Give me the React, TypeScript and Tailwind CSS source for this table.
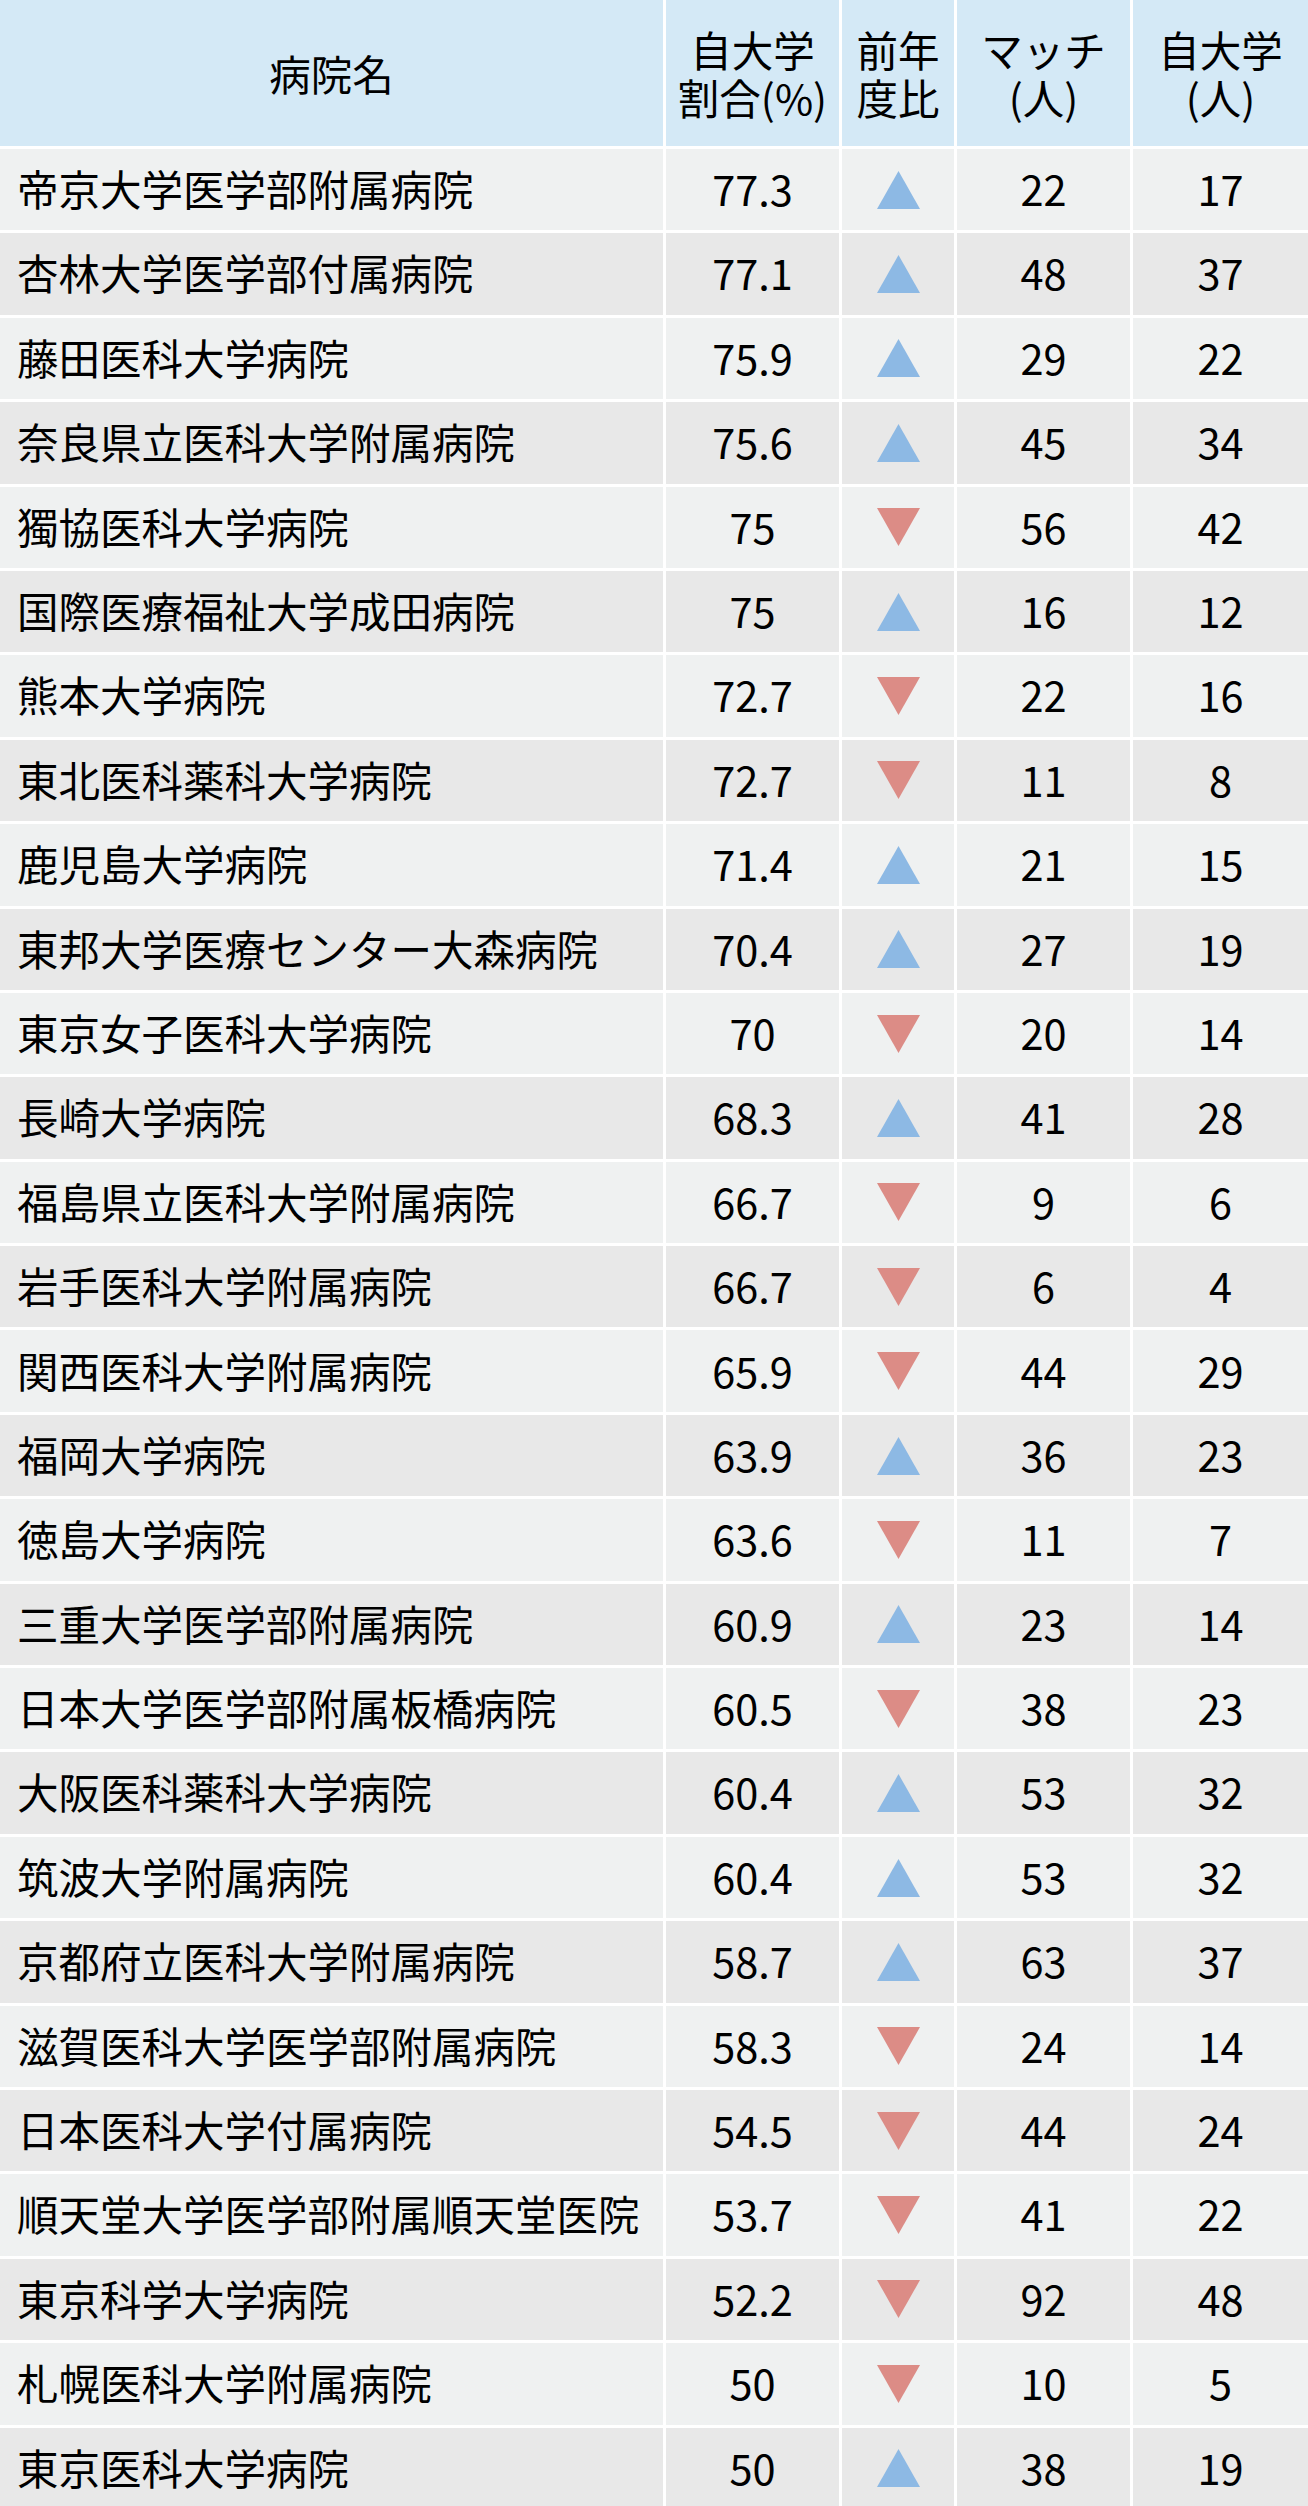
const rows: [string, string, "up" | "down", number, number][] = [
  ["帝京大学医学部附属病院", "77.3", "up", 22, 17],
  ["杏林大学医学部付属病院", "77.1", "up", 48, 37],
  ["藤田医科大学病院", "75.9", "up", 29, 22],
  ["奈良県立医科大学附属病院", "75.6", "up", 45, 34],
  ["獨協医科大学病院", "75", "down", 56, 42],
  ["国際医療福祉大学成田病院", "75", "up", 16, 12],
  ["熊本大学病院", "72.7", "down", 22, 16],
  ["東北医科薬科大学病院", "72.7", "down", 11, 8],
  ["鹿児島大学病院", "71.4", "up", 21, 15],
  ["東邦大学医療センター大森病院", "70.4", "up", 27, 19],
  ["東京女子医科大学病院", "70", "down", 20, 14],
  ["長崎大学病院", "68.3", "up", 41, 28],
  ["福島県立医科大学附属病院", "66.7", "down", 9, 6],
  ["岩手医科大学附属病院", "66.7", "down", 6, 4],
  ["関西医科大学附属病院", "65.9", "down", 44, 29],
  ["福岡大学病院", "63.9", "up", 36, 23],
  ["徳島大学病院", "63.6", "down", 11, 7],
  ["三重大学医学部附属病院", "60.9", "up", 23, 14],
  ["日本大学医学部附属板橋病院", "60.5", "down", 38, 23],
  ["大阪医科薬科大学病院", "60.4", "up", 53, 32],
  ["筑波大学附属病院", "60.4", "up", 53, 32],
  ["京都府立医科大学附属病院", "58.7", "up", 63, 37],
  ["滋賀医科大学医学部附属病院", "58.3", "down", 24, 14],
  ["日本医科大学付属病院", "54.5", "down", 44, 24],
  ["順天堂大学医学部附属順天堂医院", "53.7", "down", 41, 22],
  ["東京科学大学病院", "52.2", "down", 92, 48],
  ["札幌医科大学附属病院", "50", "down", 10, 5],
  ["東京医科大学病院", "50", "up", 38, 19],
];

function Arrow({ dir }: { dir: "up" | "down" }) {
  return dir === "up" ? (
    <svg width="43" height="38" viewBox="0 0 43 38">
      <polygon points="21.5,0 43,38 0,38" fill="#8db9e4" />
    </svg>
  ) : (
    <svg width="43" height="38" viewBox="0 0 43 38">
      <polygon points="0,0 43,0 21.5,38" fill="#dc8c86" />
    </svg>
  );
}

export default function App() {
  const head = "bg-[#d4e9f6] flex flex-col items-center justify-center text-center";
  return (
    <div
      className="w-[1308px] bg-white text-black text-[41.5px]"
      style={{ fontFamily: '"Noto Sans CJK JP", "Noto Sans", sans-serif' }}
    >
      <div className="grid grid-cols-[663px_173px_112px_173px_175px] gap-[3px] auto-rows-[81.4px] grid-rows-[146px]">
        <div className={head}>病院名</div>
        <div className={head}>
          <span className="leading-[48px]">自大学</span>
          <span className="leading-[48px]">割合(%)</span>
        </div>
        <div className={head}>
          <span className="leading-[48px]">前年</span>
          <span className="leading-[48px]">度比</span>
        </div>
        <div className={head}>
          <span className="leading-[48px]">マッチ</span>
          <span className="leading-[48px]">(人)</span>
        </div>
        <div className={head}>
          <span className="leading-[48px]">自大学</span>
          <span className="leading-[48px]">(人)</span>
        </div>

        {rows.map(([name, pct, dir, match, own], i) => {
          const bg = i % 2 === 0 ? "bg-[#eff1f1]" : "bg-[#e8e8e8]";
          return [
            <div key={`n${i}`} className={`${bg} flex items-center pl-[17px] pb-[3px] whitespace-nowrap`}>
              {name}
            </div>,
            <div key={`p${i}`} className={`${bg} flex items-center justify-center pb-[3px]`}>
              {pct}
            </div>,
            <div key={`d${i}`} className={`${bg} flex items-center justify-center`}>
              <Arrow dir={dir} />
            </div>,
            <div key={`m${i}`} className={`${bg} flex items-center justify-center pb-[3px]`}>
              {match}
            </div>,
            <div key={`o${i}`} className={`${bg} flex items-center justify-center pb-[3px]`}>
              {own}
            </div>,
          ];
        })}
      </div>
    </div>
  );
}
